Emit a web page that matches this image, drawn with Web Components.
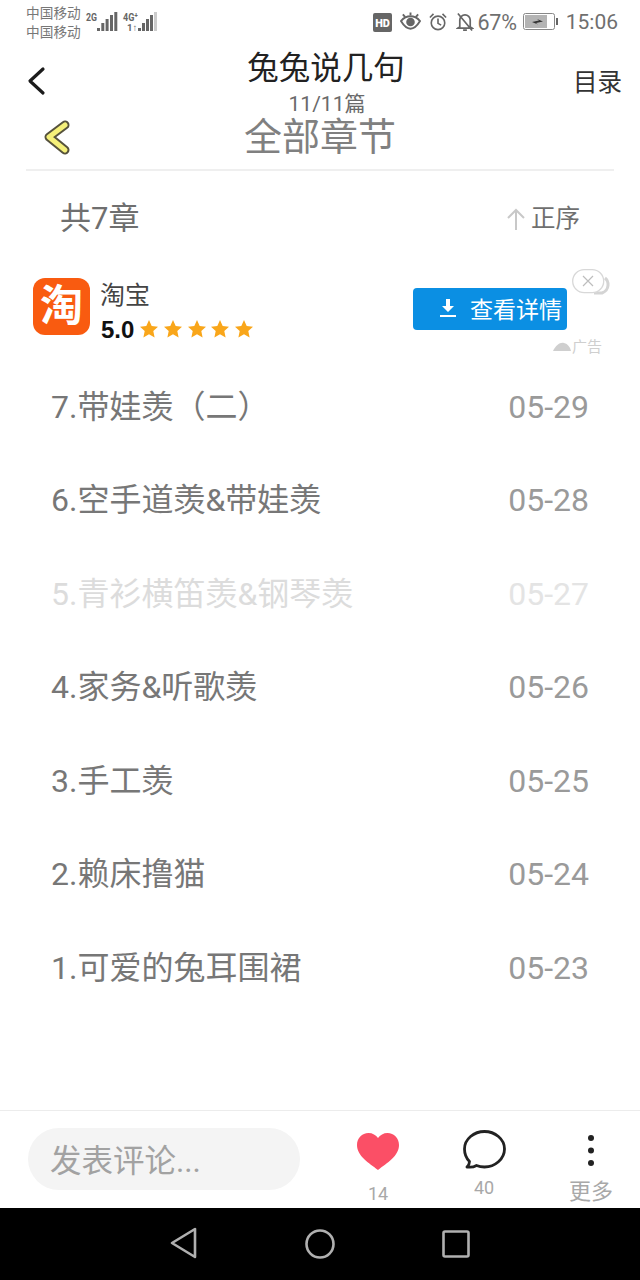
<!DOCTYPE html>
<html lang="zh">
<head>
<meta charset="utf-8">
<title>全部章节</title>
<style>
  html, body { margin: 0; height: 100%; background: #fff; }
  body {
    width: 640px; height: 1280px; overflow: hidden;
    display: flex; flex-direction: column;
    font-family: Roboto, "Noto Sans CJK SC", sans-serif;
  }
</style>
</head>
<body>
<status-bar></status-bar>
<app-header title="兔兔说几句" sub="11/11篇" action="目录"></app-header>
<chapter-title>全部章节</chapter-title>
<chapter-sort count="共7章" order="正序"></chapter-sort>
<ad-card></ad-card>
<chapter-list>
  <chapter-row name="7.带娃羡（二）" date="05-29"></chapter-row>
  <chapter-row name="6.空手道羡&amp;带娃羡" date="05-28"></chapter-row>
  <chapter-row name="5.青衫横笛羡&amp;钢琴羡" date="05-27" read></chapter-row>
  <chapter-row name="4.家务&amp;听歌羡" date="05-26"></chapter-row>
  <chapter-row name="3.手工羡" date="05-25"></chapter-row>
  <chapter-row name="2.赖床撸猫" date="05-24"></chapter-row>
  <chapter-row name="1.可爱的兔耳围裙" date="05-23"></chapter-row>
</chapter-list>
<comment-bar></comment-bar>
<nav-bar></nav-bar>

<script>
// small helper, every component only differs in its markup
function define(tag, css, html) {
  customElements.define(tag, class extends HTMLElement {
    constructor() {
      super();
      const attrs = {};
      for (const a of this.attributes) attrs[a.name] = a.value;
      this.attachShadow({ mode: 'open' }).innerHTML =
        `<style>${css}</style>` + (typeof html === 'function' ? html(attrs) : html);
    }
  });
}

define('status-bar', `
  :host { display: flex; align-items: center; height: 44px; flex: none; padding: 0 22px 0 26px; color: #6f6f6f; }
  .ops { font-size: 13.700px; line-height: 19px; width: 58px; white-space: nowrap; color: #777; margin-top: 2px; }
  .right { margin-left: auto; display: flex; align-items: center; }
  .pct { font-size: 21.500px; margin-left: 3px; letter-spacing: -.2px; }
  .time { font-size: 21px; margin-left: 7px; }
  svg { display: block; flex: none; }
`, `
  <div class="ops">中国移动<br>中国移动</div>
  <svg width="80" height="24" viewBox="0 0 80 24" fill="#666">
    <text x="2" y="10.500" font-family="Roboto" font-size="11" font-weight="700" textLength="11" lengthAdjust="spacingAndGlyphs">2G</text>
    <rect x="13" y="18" width="3" height="3"/><rect x="17.300" y="13" width="3" height="8"/>
    <rect x="21.600" y="9" width="3" height="12"/><rect x="26" y="5" width="3" height="16"/>
    <rect x="30.300" y="2" width="3" height="19"/>
    <text x="39" y="10.500" font-family="Roboto" font-size="11" font-weight="700" textLength="15" lengthAdjust="spacingAndGlyphs">4G⁺</text>
    <text x="43" y="21" font-family="Roboto" font-size="9.500" font-weight="700">1↑</text>
    <rect x="54" y="18" width="3" height="3"/><rect x="58" y="13" width="3" height="8"/>
    <rect x="62" y="9" width="3" height="12"/><rect x="66" y="5" width="3" height="16"/>
    <rect x="70" y="2" width="3" height="19" fill="#ccc"/>
  </svg>
  <div class="right">
    <svg width="19" height="19" viewBox="0 0 20 20" style="margin-right:8px"><rect width="20" height="20" rx="2" fill="#666"/>
      <text x="10" y="14.500" text-anchor="middle" fill="#fff" font-family="Roboto" font-size="11.500" font-weight="900">HD</text></svg>
    <svg width="21" height="20" viewBox="0 0 22 20" fill="none" stroke="#666" stroke-width="2" style="margin-right:8px">
      <path d="M1 9c3-3.500 6-5 10-5s7 1.500 10 5c-3 5-6 8-10 8S4 14 1 9z"/><circle cx="11" cy="10" r="3.500" fill="#666"/>
      <path d="M3 2l2.500 3M11 0v3M19 2l-2.500 3"/></svg>
    <svg width="18" height="20" viewBox="0 0 20 20" fill="none" stroke="#666" stroke-width="1.800" style="margin-right:9px">
      <circle cx="10" cy="11" r="7.500"/><path d="M10 6v5.500l3.500 2M1 5l4-4M19 5l-4-4"/></svg>
    <svg width="18" height="20" viewBox="0 0 19 20" fill="none" stroke="#666" stroke-width="1.800">
      <path d="M4 15V8c0-3 2.500-5.500 5.500-5.500S15 5 15 8v7l2 1.500H2zM7.500 18.500h4M2 1l15 18"/></svg>
    <span class="pct">67%</span>
    <svg width="36" height="18" viewBox="0 0 36 18" style="margin-left:6px">
      <rect x=".5" y=".5" width="31" height="16" rx="2" fill="#fff" stroke="#888"/>
      <rect x="2" y="2" width="22" height="13" fill="#b4b4b4"/>
      <rect x="33" y="5" width="2" height="7" fill="#666"/>
      <path d="M9 9l7-1.500L14 6l6 2.500-7 1.500 2 1.500z" fill="#333"/></svg>
    <span class="time">15:06</span>
  </div>
`);

define('app-header', `
  :host { display: block; position: relative; height: 62px; flex: none; text-align: center; }
  .t { font-size: 31.500px; line-height: 40px; padding: 5px 0 0 12px; color: #222; }
  .s { font-size: 21px; line-height: 24px; margin-top: 3px; padding-left: 14px; color: #6a6a6a; }
  .back { position: absolute; left: 26px; top: 22px; }
  .a { position: absolute; right: 18px; top: 23px; font-size: 24.500px; line-height: 32px; color: #333; }
`, a => `
  <svg class="back" width="22" height="30" viewBox="0 0 22 30" fill="none" stroke="#1b1b1b" stroke-width="3.200" stroke-linecap="round" stroke-linejoin="round"><path d="M17 3L4 15l13 12"/></svg>
  <div class="t">${a.title || ''}</div>
  <div class="s">${a.sub || ''}</div>
  <div class="a">${a.action || ''}</div>
`);

define('chapter-title', `
  :host { display: block; position: relative; flex: none; height: 65px; margin: 0 26px; border-bottom: 2px solid #efefef; box-sizing: border-box; text-align: center; }
  .t { font-size: 38px; line-height: 60px; padding-top: 1px; color: #808080; }
  svg { position: absolute; left: 15px; top: 11px; }
`, `
  <svg width="34" height="40" viewBox="0 0 34 40" fill="none" stroke-linecap="round" stroke-linejoin="round"><path d="M24 8L8 20l16 13" stroke="#56523c" stroke-width="9"/><path d="M24 8L8 20l16 13" stroke="#f5f07a" stroke-width="5"/></svg>
  <div class="t"><slot></slot></div>
`);

define('chapter-sort', `
  :host { display: flex; align-items: center; justify-content: space-between; flex: none; height: 95px; padding: 0 60px; box-sizing: border-box; }
  .c { font-size: 31px; line-height: 40px; color: #6f6f6f; }
  .o { display: flex; align-items: center; gap: 5px; font-size: 24.500px; line-height: 32px; color: #6f6f6f; }
`, a => `
  <div class="c">${a.count || ''}</div>
  <div class="o"><svg width="20" height="24" viewBox="0 0 20 24" fill="none" stroke="#c8c8c8" stroke-width="2"><path d="M10 23V3M2 11l8-8 8 8"/></svg>${a.order || ''}</div>
`);

define('ad-card', `
  :host { display: flex; position: relative; flex: none; height: 94px; box-sizing: border-box; padding: 12px 73px 0 33px; }
  .logo { flex: none; width: 57px; height: 57px; border-radius: 12px; background: #f95b10;
    color: #fff; font-size: 43px; font-weight: 700; line-height: 56px; text-align: center; overflow: hidden; }
  .info { margin-left: 10px; }
  .name { font-size: 25px; line-height: 36px; color: #444; }
  .rate { display: flex; align-items: center; height: 30px; margin-top: 1px; padding-left: 1px; font-size: 24px; font-weight: 700; color: #111; font-family: "Liberation Sans", sans-serif; }
  .stars { display: flex; gap: 5.600px; margin-left: 6px; margin-top: -2px; }
  .stars svg { display: block; }
  .btn { margin-left: auto; margin-top: 10px; width: 154px; height: 42px; box-sizing: border-box; padding-top: 3px; border-radius: 4px; background: #0b8fe3; color: #fff;
    font-size: 23px; line-height: 39px; display: flex; align-items: center; white-space: nowrap; }
  .btn svg { margin: -5px 13px 0 26px; }
  .close { position: absolute; left: 572px; top: 3px; }
  .tag { position: absolute; left: 553px; top: 71px; display: flex; align-items: center; font-size: 15px; line-height: 20px; color: #cfcfcf; }
`, `
  <div class="logo">淘</div>
  <div class="info">
    <div class="name">淘宝</div>
    <div class="rate">5.0<div class="stars">${'<svg width="18" height="18" viewBox="0 0 18 18"><path d="M9 0l2.700 6 6.300.7-4.700 4.300 1.300 6.500L9 14.200l-5.600 3.300L4.700 11 0 6.700 6.300 6z" fill="#f9a61a"/></svg>'.repeat(5)}</div></div>
  </div>
  <div class="btn"><svg width="18" height="24" viewBox="0 0 18 24" fill="#fff"><path d="M7 3h4v7h4l-6 6-6-6h4zM1 19h16v2H1z"/></svg>查看详情</div>
  <svg class="close" width="40" height="32" viewBox="0 0 40 32" fill="none">
    <path d="M33 9c4 3 5 12-3 15h-8" stroke="#d4d4d4" stroke-width="3"/>
    <rect x=".7" y=".7" width="31" height="23" rx="11.500" fill="#fff" stroke="#d8d8d8" stroke-width="1.300"/>
    <path d="M11 7l10 10M21 7L11 17" stroke="#bdbdbd" stroke-width="1.200"/>
  </svg>
  <div class="tag"><svg width="19" height="12" viewBox="0 0 19 12" fill="#cfcfcf"><path d="M0 10C3 4 7 1 11 2s6 4 7 8z"/></svg>广告</div>
`);

define('chapter-list', `
  :host { display: block; flex: 1 1 auto; }
`, `<slot></slot>`);

define('chapter-row', `
  :host { display: flex; align-items: center; justify-content: space-between; height: 93.500px; padding: 0 51px; font-size: 32px; color: #777;
    text-spacing-trim: space-all; font-feature-settings: "chws" 0, "palt" 0, "halt" 0; }
  :host([read]) { color: #dcdcdc; }
  div { line-height: 40px; }
  .d { color: #9a9a9a; }
  :host([read]) .d { color: #e4e4e4; }
`, a => `<div>${a.name || ''}</div><div class="d">${a.date || ''}</div>`);

define('comment-bar', `
  :host { display: block; position: relative; flex: none; height: 98px; border-top: 1px solid #ececec; box-sizing: border-box; color: #a8a8a8; }
  .in { position: absolute; left: 28px; top: 17px; width: 272px; height: 62px; border-radius: 31px; background: #f4f4f4;
    font-size: 31.500px; line-height: 62px; padding: 3px 0 0 22px; box-sizing: border-box; color: #a2a2a2; }
  .i { position: absolute; display: block; }
  .n { position: absolute; width: 60px; text-align: center; font-size: 18px; line-height: 20px; }
`, `
  <div class="in">发表评论...</div>
  <svg class="i" style="left:357px;top:22px" width="42" height="38" viewBox="0 0 42 38"><path d="M21 37C12 30 0 23 0 12 0 5 5 0 11.500 0c4 0 7.500 2 9.500 5 2-3 5.500-5 9.500-5C37 0 42 5 42 12c0 11-12 18-21 25z" fill="#fb4f66"/></svg>
  <div class="n" style="left:348px;top:73px">14</div>
  <svg class="i" style="left:463px;top:19px" width="43" height="39" viewBox="0 0 43 39" fill="none"><path d="M21.500 1.500C32 1.500 41.500 9 41.500 19S32 37 21.500 37c-3 0-5.500-.5-8-1.500-2.500 1.500-6 2-9.500 1.500 1.500-1.500 2.500-3.500 2.500-5.500C3 28 1.500 24 1.500 19c0-10 9.500-17.500 20-17.500z" stroke="#222" stroke-width="2.800" stroke-linejoin="round"/></svg>
  <div class="n" style="left:454px;top:67px">40</div>
  <svg class="i" style="left:586px;top:23px" width="10" height="36" viewBox="0 0 10 36" fill="#222"><circle cx="5" cy="4" r="3"/><circle cx="5" cy="16.500" r="3"/><circle cx="5" cy="29" r="3"/></svg>
  <div class="n" style="left:561px;top:66px;font-size:22px;line-height:30px;">更多</div>
`);

define('nav-bar', `
  :host { display: block; position: relative; flex: none; height: 72px; background: #000; }
  svg { position: absolute; }
`, `
  <svg style="left:170px;top:19px" width="27" height="32" viewBox="0 0 27 32" fill="none" stroke="#b0b0b0" stroke-width="2.600" stroke-linejoin="round"><path d="M25 2v28L2 16z"/></svg>
  <svg style="left:305px;top:21px" width="30" height="30" viewBox="0 0 30 30" fill="none" stroke="#b0b0b0" stroke-width="2.600"><circle cx="15" cy="15" r="13.500"/></svg>
  <svg style="left:442px;top:22px" width="28" height="28" viewBox="0 0 28 28" fill="none" stroke="#b0b0b0" stroke-width="2.600"><rect x="1.500" y="1.500" width="25" height="25" rx="1.500"/></svg>
`);
</script>
</body>
</html>
